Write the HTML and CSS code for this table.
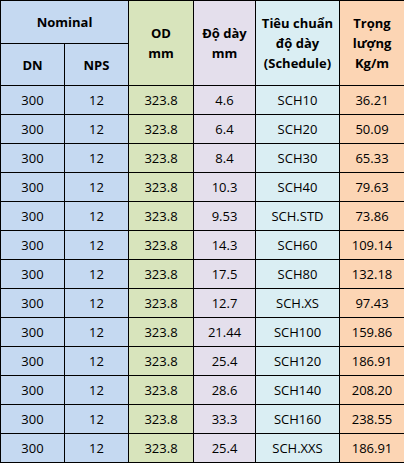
FILE: index.html
```html
<!DOCTYPE html>
<html lang="vi">
  <head>
    <meta charset="UTF-8" />
    <meta name="viewport" content="width=device-width, initial-scale=1.0" />
    <title>Ống thép SCH - DN300</title>
    <link rel="stylesheet" href="styles.css">
  </head>
  <body>
    <table class="pipe-table">
      <colgroup>
        <col class="col-dn" />
        <col class="col-nps" />
        <col class="col-od" />
        <col class="col-wall" />
        <col class="col-sch" />
        <col class="col-kg" />
      </colgroup>
      <thead>
        <tr class="head-top">
          <th colspan="2" class="c-blue">Nominal</th>
          <th rowspan="2" class="c-green">OD<br />mm</th>
          <th rowspan="2" class="c-lilac">Độ dày<br />mm</th>
          <th rowspan="2" class="c-cyan">Tiêu chuẩn<br />độ dày<br />(Schedule)</th>
          <th rowspan="2" class="c-peach">Trọng<br />lượng<br />Kg/m</th>
        </tr>
        <tr class="head-sub">
          <th class="c-blue">DN</th>
          <th class="c-blue">NPS</th>
        </tr>
      </thead>
      <tbody id="rows"></tbody>
    </table>

    <script>
      // DN300 / NPS 12 - OD 323.8
      const data = [
        ["4.6", "SCH10", "36.21"],
        ["6.4", "SCH20", "50.09"],
        ["8.4", "SCH30", "65.33"],
        ["10.3", "SCH40", "79.63"],
        ["9.53", "SCH.STD", "73.86"],
        ["14.3", "SCH60", "109.14"],
        ["17.5", "SCH80", "132.18"],
        ["12.7", "SCH.XS", "97.43"],
        ["21.44", "SCH100", "159.86"],
        ["25.4", "SCH120", "186.91"],
        ["28.6", "SCH140", "208.20"],
        ["33.3", "SCH160", "238.55"],
        ["25.4", "SCH.XXS", "186.91"],
      ];

      const tbody = document.getElementById("rows");
      data.forEach(function (r) {
        const tr = document.createElement("tr");
        tr.innerHTML =
          '<td class="c-blue">300</td>' +
          '<td class="c-blue">12</td>' +
          '<td class="c-green">323.8</td>' +
          '<td class="c-lilac">' + r[0] + "</td>" +
          '<td class="c-cyan">' + r[1] + "</td>" +
          '<td class="c-peach">' + r[2] + "</td>";
        tbody.appendChild(tr);
      });
    </script>
  </body>
</html>
```

FILE: styles.css
```css
:root {
  --blue: #c5d9f1;
  --green: #d8e4bc;
  --lilac: #e4dfec;
  --cyan: #daeef3;
  --peach: #fcd5b4;
  --line: #000;
}

* {
  box-sizing: border-box;
  margin: 0;
  padding: 0;
}

body {
  background: #fff;
  font-family: "Open Sans", "Liberation Sans", sans-serif;
  color: #000;
}

.pipe-table {
  width: 404px;
  border-collapse: collapse;
  table-layout: fixed;
  font-size: 13px;
}

.col-dn,
.col-nps {
  width: 64px;
}

.col-od {
  width: 65px;
}

.col-wall {
  width: 62px;
}

.col-sch {
  width: 84px;
}

.col-kg {
  width: 65px;
}

.pipe-table th,
.pipe-table td {
  border: 1px solid var(--line);
  text-align: center;
  vertical-align: middle;
  padding: 0;
}

.pipe-table th {
  font-weight: 700;
  line-height: 20px;
}

.head-top {
  height: 43px;
}

.head-sub {
  height: 42px;
}

.pipe-table td {
  height: 29px;
}

.c-blue {
  background: var(--blue);
}

.c-green {
  background: var(--green);
}

.c-lilac {
  background: var(--lilac);
}

.c-cyan {
  background: var(--cyan);
}

.c-peach {
  background: var(--peach);
}
```
